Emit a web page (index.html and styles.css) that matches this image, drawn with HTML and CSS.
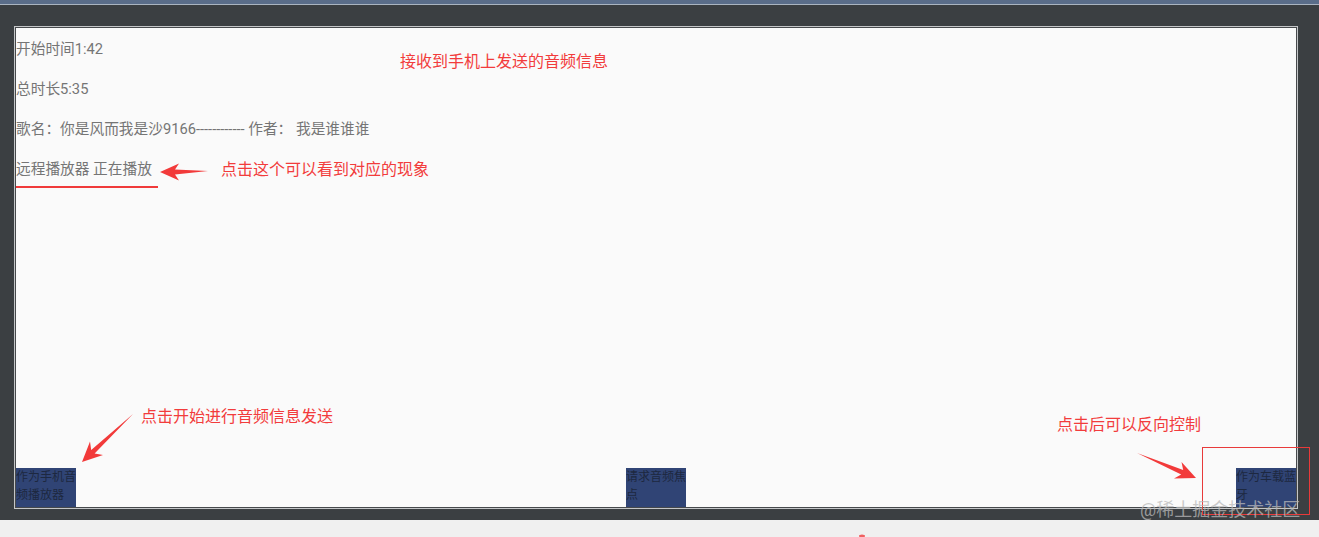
FILE: index.html
```html
<!DOCTYPE html>
<html lang="zh">
<head>
<meta charset="utf-8">
<title>Audio</title>
<link rel="stylesheet" href="styles.css">
</head>
<body>
<div class="topbar"></div>
<div class="stage">
  <div class="frame">
    <div class="screen">
      <div class="info">
        <div class="line">开始时间1:42</div>
        <div class="line">总时长5:35</div>
        <div class="line">歌名：你是风而我是沙9166------------ 作者： 我是谁谁谁</div>
        <div class="line last">远程播放器 正在播放</div>
        <div class="underline"></div>
      </div>
      <div class="buttons">
        <div class="btn">作为手机音频播放器</div>
        <div class="btn">请求音频焦点</div>
        <div class="btn">作为车载蓝牙</div>
      </div>
    </div>
  </div>
</div>
<div class="footer"></div>

<span class="note n1">接收到手机上发送的音频信息</span>
<span class="note n2">点击这个可以看到对应的现象</span>
<span class="note n3">点击开始进行音频信息发送</span>
<span class="note n4">点击后可以反向控制</span>
<div class="redbox"></div>
<span class="watermark">@稀土掘金技术社区</span>
<svg class="arrows" width="1319" height="537" viewBox="0 0 1319 537">
  <polygon fill="#f23a3a" points="160,172 179,180.5 175,174.5 208,171 175,169.5 179,163.5"/>
  <polygon fill="#f23a3a" points="82,462 103,455 94.6,453.5 133,414 91.2,449.9 90,441.5"/>
  <polygon fill="#f23a3a" points="1196,478 1174,478.5 1181.2,474.5 1137,453 1183.2,469.9 1181.5,462"/>
  <ellipse cx="862" cy="536" rx="3" ry="1.5" fill="#f06060"/>
</svg>
</body>
</html>
```

FILE: styles.css
```css
html, body {
  margin: 0;
  padding: 0;
}
body {
  width: 1319px;
  height: 537px;
  background: #f0f0f0;
  font-family: "Roboto", "Noto Sans CJK SC", sans-serif;
  position: relative;
  overflow: hidden;
}
.topbar {
  height: 4px;
  background: #5a6d89;
  border-bottom: 1px solid #aab4c0;
}
.stage {
  height: 515px;
  background: #3b3f42;
  padding-top: 21px;
  padding-left: 14px;
  box-sizing: border-box;
}
.frame {
  width: 1284px;
  height: 483px;
  box-sizing: border-box;
  border: 1px solid #c4c6c8;
}
.screen {
  height: 100%;
  box-sizing: border-box;
  border: 1px solid #46494c;
  background: #fafafa;
  display: flex;
  flex-direction: column;
  justify-content: space-between;
}
.info {
  padding-top: 11px;
}
.line {
  font-size: 14.7px;
  line-height: 20px;
  color: #757575;
  margin-bottom: 20px;
  white-space: nowrap;
}
.line.last {
  margin-bottom: 0;
}
.underline {
  margin-top: 7px;
  width: 142px;
  height: 2px;
  background: #f03a3a;
}
.buttons {
  display: flex;
  justify-content: space-between;
  align-items: flex-end;
}
.btn {
  width: 60px;
  height: 39px;
  background: #304475;
  color: #1d2840;
  font-size: 12px;
  line-height: 18px;
  overflow: hidden;
  word-break: break-all;
}
.footer {
  height: 17px;
}
.note {
  position: absolute;
  font-size: 16px;
  line-height: 20px;
  color: #f23c3c;
  white-space: nowrap;
}
.n1 { left: 400px; top: 52px; }
.n2 { left: 221px; top: 160px; }
.n3 { left: 141px; top: 407px; }
.n4 { left: 1057px; top: 415px; }
.redbox {
  position: absolute;
  left: 1202px;
  top: 447px;
  width: 106px;
  height: 66px;
  border: 1px solid #e83a3a;
}
.watermark {
  position: absolute;
  left: 1140px;
  top: 498px;
  font-size: 18px;
  line-height: 24px;
  color: rgba(185, 185, 185, 0.75);
  white-space: nowrap;
}
.arrows {
  position: absolute;
  left: 0;
  top: 0;
  pointer-events: none;
}
```
